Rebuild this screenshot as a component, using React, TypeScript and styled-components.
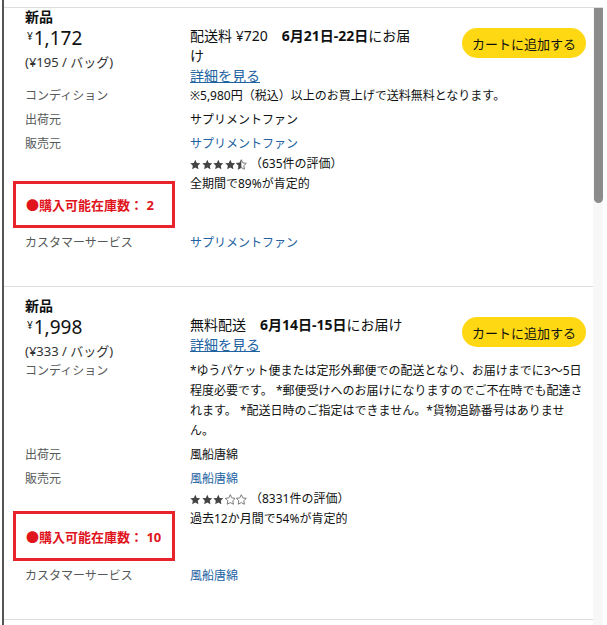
import React from "react";
import styled, { createGlobalStyle } from "styled-components";

const GlobalStyle = createGlobalStyle`
  html, body {
    margin: 0;
    padding: 0;
    background: #fff;
  }
  body {
    font-family: "Noto Sans", "Noto Sans CJK JP", sans-serif;
    color: #0f1111;
  }
`;

const Page = styled.div`
  width: 607px;
  height: 625px;
  overflow: hidden;
  display: flex;
`;

const Frame = styled.div`
  margin-left: 2px;
  border-left: 2px solid #555;
  padding-top: 7px;
  flex: 1;
  display: flex;
  flex-direction: column;
`;

const Panel = styled.div`
  width: 599px;
  border-top: 1px solid #ddd;
  flex: 1;
  min-height: 0;
  display: flex;
`;

const Viewport = styled.div`
  width: 589px;
  overflow: hidden;
`;

// the list is scrolled a little past the top of the first offer
const OfferList = styled.div`
  margin-top: -10px;
`;

const ScrollTrack = styled.div`
  width: 10px;
  background: #f7f7f7;
  display: flex;
  justify-content: center;
`;

const ScrollThumb = styled.div`
  width: 9px;
  height: 195px;
  background: #8b8b8b;
  border-radius: 0 0 5px 5px;
`;

const Card = styled.section`
  padding: 10px 7px 29px 21px;
  border-bottom: 1px solid #ddd;
`;

const ConditionTitle = styled.div`
  font-size: 14px;
  font-weight: 700;
  line-height: 18px;
`;

const Summary = styled.div`
  display: grid;
  grid-template-columns: 165px 1fr;
`;

const Price = styled.div`
  display: flex;
  align-items: flex-start;
  height: 24px;
`;

const Yen = styled.span`
  font-size: 10px;
  line-height: 14px;
  margin: 3px 1px 0 2px;
`;

const Amount = styled.span`
  font-size: 19px;
  line-height: 24px;
`;

const UnitPrice = styled.div`
  margin-top: 2px;
  font-size: 13px;
  line-height: 20px;
  color: #333;
`;

const DeliveryRow = styled.div`
  display: flex;
  justify-content: space-between;
  align-items: flex-start;
`;

const DeliveryInfo = styled.div`
  width: 226px;
  font-size: 14px;
  line-height: 20px;
`;

const DeliveryDate = styled.b`
  margin-left: 14px;
`;

const DetailLink = styled.a`
  color: #2162a1;
  text-decoration: underline;
`;

const CartButton = styled.button`
  margin-top: 2px;
  height: 30px;
  padding: 0 10px;
  border: none;
  border-radius: 15px;
  background: #ffd814;
  color: #0f1111;
  font-family: inherit;
  font-size: 13px;
  white-space: nowrap;
`;

const Row = styled.div`
  display: grid;
  grid-template-columns: 165px 1fr;
  margin-bottom: 4px;
  font-size: 12px;
  line-height: 20px;
`;

const Label = styled.div`
  color: #565959;
`;

const SellerLink = styled.a`
  display: block;
  color: #2162a1;
  text-decoration: none;
`;

const Rating = styled.div`
  display: flex;
  align-items: center;
  height: 20px;
`;

const Stars = styled.span`
  display: flex;
  gap: 1px;
`;

const RatingCount = styled.span`
  margin-left: 3px;
`;

const StockBox = styled.div<{ $lift: number; $h: number }>`
  box-sizing: border-box;
  width: 162px;
  height: ${(p) => p.$h}px;
  margin: ${(p) => -p.$lift}px 0 5px -12px;
  padding-left: 10px;
  border: 3px solid #e8232b;
  display: flex;
  align-items: center;
  color: #e0141d;
  font-size: 13px;
  font-weight: 700;
  white-space: nowrap;
`;

const STAR = "M12 2l3 6.3 6.9.9-5 4.8 1.3 6.9L12 17.6l-6.2 3.3L7.1 14l-5-4.8 6.9-.9z";

const Star: React.FC<{ kind: "full" | "half" | "empty" }> = ({ kind }) => {
  const id = React.useId();
  return (
    <svg width="10.6" height="11" viewBox="1.5 1.5 21 20">
      <defs>
        <clipPath id={id}>
          <rect x="0" y="0" width="12" height="24" />
        </clipPath>
      </defs>
      {kind === "full" && <path d={STAR} fill="#444" />}
      {kind !== "full" && (
        <path d={STAR} fill="none" stroke="#555" strokeWidth="1.5" strokeLinejoin="round" />
      )}
      {kind === "half" && <path d={STAR} fill="#444" clipPath={`url(#${id})`} />}
    </svg>
  );
};

const StarRow: React.FC<{ value: number }> = ({ value }) => (
  <Stars>
    {[1, 2, 3, 4, 5].map((i) => (
      <Star key={i} kind={value >= i ? "full" : value >= i - 0.5 ? "half" : "empty"} />
    ))}
  </Stars>
);

interface Offer {
  price: string;
  unit: string;
  shipping: string;
  date: string;
  note: string;
  shipFrom: string;
  seller: string;
  stars: number;
  reviews: string;
  positive: string;
  stock: string;
  lift: number;
  boxHeight: number;
}

const offers: Offer[] = [
  {
    price: "1,172",
    unit: "(¥195 / バッグ)",
    shipping: "配送料 ¥720",
    date: "6月21日-22日",
    note: "※5,980円（税込）以上のお買上げで送料無料となります。",
    shipFrom: "サプリメントファン",
    seller: "サプリメントファン",
    stars: 4.5,
    reviews: "（635件の評価）",
    positive: "全期間で89%が肯定的",
    stock: "2",
    lift: 17,
    boxHeight: 47,
  },
  {
    price: "1,998",
    unit: "(¥333 / バッグ)",
    shipping: "無料配送",
    date: "6月14日-15日",
    note:
      "*ゆうパケット便または定形外郵便での配送となり、お届けまでに3～5日程度必要です。 *郵便受けへのお届けになりますのでご不在時でも配達されます。 *配送日時のご指定はできません。*貨物追跡番号はありません。",
    shipFrom: "風船唐綿",
    seller: "風船唐綿",
    stars: 3,
    reviews: "（8331件の評価）",
    positive: "過去12か月間で54%が肯定的",
    stock: "10",
    lift: 22,
    boxHeight: 50,
  },
];

const OfferCard: React.FC<{ offer: Offer }> = ({ offer }) => (
  <Card>
    <ConditionTitle>新品</ConditionTitle>
    <Summary>
      <div>
        <Price>
          <Yen>¥</Yen>
          <Amount>{offer.price}</Amount>
        </Price>
        <UnitPrice>{offer.unit}</UnitPrice>
      </div>
      <DeliveryRow>
        <DeliveryInfo>
          <div>
            {offer.shipping}
            <DeliveryDate>{offer.date}</DeliveryDate>にお届け
          </div>
          <DetailLink>詳細を見る</DetailLink>
        </DeliveryInfo>
        <CartButton>カートに追加する</CartButton>
      </DeliveryRow>
    </Summary>
    <Row>
      <Label>コンディション</Label>
      <div>{offer.note}</div>
    </Row>
    <Row>
      <Label>出荷元</Label>
      <div>{offer.shipFrom}</div>
    </Row>
    <Row>
      <Label>販売元</Label>
      <div>
        <SellerLink>{offer.seller}</SellerLink>
        <Rating>
          <StarRow value={offer.stars} />
          <RatingCount>{offer.reviews}</RatingCount>
        </Rating>
        <div>{offer.positive}</div>
      </div>
    </Row>
    <StockBox $lift={offer.lift} $h={offer.boxHeight}>
      ●購入可能在庫数： {offer.stock}
    </StockBox>
    <Row>
      <Label>カスタマーサービス</Label>
      <SellerLink>{offer.seller}</SellerLink>
    </Row>
  </Card>
);

const App: React.FC = () => (
  <>
    <GlobalStyle />
    <Page>
      <Frame>
        <Panel>
          <Viewport>
            <OfferList>
              {offers.map((o) => (
                <OfferCard key={o.price} offer={o} />
              ))}
            </OfferList>
          </Viewport>
          <ScrollTrack>
            <ScrollThumb />
          </ScrollTrack>
        </Panel>
      </Frame>
    </Page>
  </>
);

export default App;
